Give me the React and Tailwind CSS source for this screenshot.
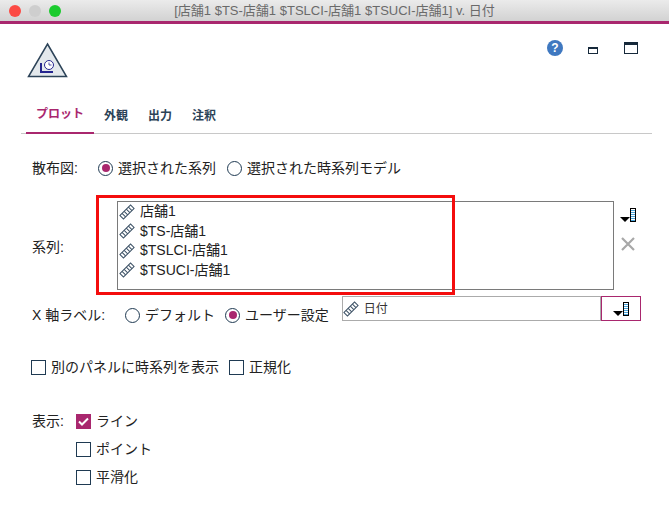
const font = { fontFamily: '"Liberation Sans", "Noto Sans CJK JP", sans-serif' }

function SeriesIcon() {
  return (
    <svg width="16" height="16" viewBox="0 0 16 16" className="shrink-0" fill="none">
      <g transform="rotate(-45 8 8)" stroke="#3d5266" strokeWidth="1">
        <rect x="0.5" y="5.5" width="15" height="5" fill="#fff" />
        <path d="M3.5 5.5v5M6.5 5.5v5M9.5 5.5v5M12.5 5.5v5" />
      </g>
    </svg>
  )
}

function PickIcon() {
  return (
    <svg width="16" height="14" viewBox="0 0 16 14">
      <path d="M0 9h10l-5 5z" fill="#000" />
      <rect x="10.5" y="0.5" width="5" height="13" fill="#fff" stroke="#000" />
      <path d="M11 2.5h4M11 4.5h4M11 6.5h4M11 8.5h4M11 10.5h4M11 12.5h4" stroke="#4aa3d8" />
    </svg>
  )
}

function Radio({ checked, label }) {
  return (
    <div className="flex items-center gap-[5px] whitespace-nowrap">
      <span className="flex h-[15px] w-[15px] items-center justify-center rounded-full border border-[#1f3a52] bg-white">
        {checked && <span className="h-[8px] w-[8px] rounded-full bg-[#a9276e]" />}
      </span>
      <span>{label}</span>
    </div>
  )
}

function Check({ checked, label }) {
  return (
    <div className="flex items-center gap-[5px] whitespace-nowrap">
      {checked ? (
        <span className="flex h-[15px] w-[15px] items-center justify-center bg-[#a9276e]">
          <svg width="11" height="9" viewBox="0 0 11 9" fill="none">
            <path d="M1 4.5 4 7.5 10 1.5" stroke="#fff" strokeWidth="2" />
          </svg>
        </span>
      ) : (
        <span className="h-[15px] w-[15px] border border-[#1f3a52] bg-white" />
      )}
      <span>{label}</span>
    </div>
  )
}

export default function App() {
  const series = ['店舗1', '$TS-店舗1', '$TSLCI-店舗1', '$TSUCI-店舗1']

  return (
    <div className="relative h-[514px] w-[669px] overflow-hidden bg-white text-[14px] leading-[20px] text-[#222]" style={font}>
      <div className="flex h-[21px] items-center bg-gradient-to-b from-[#ebebeb] to-[#d2d2d2] pl-[9px]">
        <div className="flex gap-[8px]">
          <span className="h-[12px] w-[12px] rounded-full bg-[#fc4a44]" />
          <span className="h-[12px] w-[12px] rounded-full bg-[#cecece]" />
          <span className="h-[12px] w-[12px] rounded-full bg-[#1bcb2e]" />
        </div>
        <div className="flex-1 whitespace-nowrap pr-[61px] text-center text-[13px] text-[#6a6a6a]">[店舗1 $TS-店舗1 $TSLCI-店舗1 $TSUCI-店舗1] v. 日付</div>
      </div>
      <div className="h-[3px] bg-[#a9276e]" />

      <div className="flex h-[76px] justify-between pl-[27px] pr-[31px] pt-[18px]">
        <svg width="41" height="36" viewBox="0 0 41 36">
          <path d="M20.5 2 39.5 34.5H1.5z" fill="#e3e8ec" stroke="#2c4358" strokeWidth="1.5" />
          <path d="M14 21v9h12" fill="none" stroke="#25258f" strokeWidth="2" />
          <circle cx="22" cy="23" r="4.5" fill="#fff" stroke="#25258f" />
          <path d="M22 20.5V23h2.5" fill="none" stroke="#25258f" strokeWidth="0.8" />
        </svg>
        <div className="flex items-start">
          <span className="mt-[-2px] flex h-[16px] w-[16px] items-center justify-center rounded-full bg-[#3f78c0] text-[12px] font-bold text-white">?</span>
          <span className="ml-[25px] mt-[5px] h-[7px] w-[10px] border border-t-[2px] border-[#16293a]" />
          <span className="ml-[26px] h-[12px] w-[14px] border border-t-[3px] border-[#16293a]" />
        </div>
      </div>

      <div className="ml-[21px] mr-[17px] flex h-[34px] gap-[20px] border-b border-[#c8c8c8] text-[12px] font-bold text-[#2b4257]">
        <div className="-mb-px ml-[5px] mr-[-10px] border-b-2 border-[#a9276e] px-[10px] pt-[5px] leading-[18px] text-[#a9276e]">プロット</div>
        <div className="pt-[7px] leading-[18px]">外観</div>
        <div className="pt-[7px] leading-[18px]">出力</div>
        <div className="pt-[7px] leading-[18px]">注釈</div>
      </div>

      <div className="flex flex-col pl-[32px] pr-[28px] pt-[24px]">
        <div className="flex h-[20px] items-center">
          <span className="w-[66px]">散布図:</span>
          <div className="flex items-center gap-[11px]">
            <Radio checked label="選択された系列" />
            <Radio label="選択された時系列モデル" />
          </div>
        </div>

        <div className="mt-[23px] flex h-[89px]">
          <span className="w-[85px] pt-[36px]">系列:</span>
          <div className="flex h-full w-[497px] flex-col border border-[#7a7a7a] pl-[1px] leading-[19.5px]">
            {series.map((name) => (
              <div key={name} className="flex h-[19.5px] items-center gap-[5px]">
                <SeriesIcon />
                <span>{name}</span>
              </div>
            ))}
          </div>
          <div className="ml-[6px] flex flex-col gap-[15px] pt-[7px]">
            <PickIcon />
            <svg width="16" height="14" viewBox="0 0 16 14">
              <path d="M2 1 14 13M14 1 2 13" stroke="#a8a8a8" strokeWidth="2.2" />
            </svg>
          </div>
        </div>

        <div className="mt-[6px] flex h-[25px]">
          <div className="mt-[9px] flex h-[20px] items-center">
            <span className="w-[93px] whitespace-nowrap">X 軸ラベル:</span>
            <div className="flex items-center gap-[10px]">
              <Radio label="デフォルト" />
              <Radio checked label="ユーザー設定" />
            </div>
          </div>
          <div className="ml-[13px] flex h-[25px] w-[260px] items-center gap-[5px] border border-[#ababab] text-[12px] text-[#333]">
            <SeriesIcon />
            <span>日付</span>
          </div>
          <div className="flex h-[25px] w-[40px] items-center justify-center border border-[#a9276e]">
            <PickIcon />
          </div>
        </div>

        <div className="-ml-px mt-[36px] flex h-[20px] items-center gap-[10px]">
          <Check label="別のパネルに時系列を表示" />
          <Check label="正規化" />
        </div>

        <div className="mt-[34px] flex">
          <span className="w-[44px]">表示:</span>
          <div className="flex flex-col gap-[8px]">
            <Check checked label="ライン" />
            <Check label="ポイント" />
            <Check label="平滑化" />
          </div>
        </div>
      </div>

      <div className="pointer-events-none absolute left-[96px] top-[195px] h-[100px] w-[359px] border-[3px] border-[#f40d0d]" />
    </div>
  )
}
